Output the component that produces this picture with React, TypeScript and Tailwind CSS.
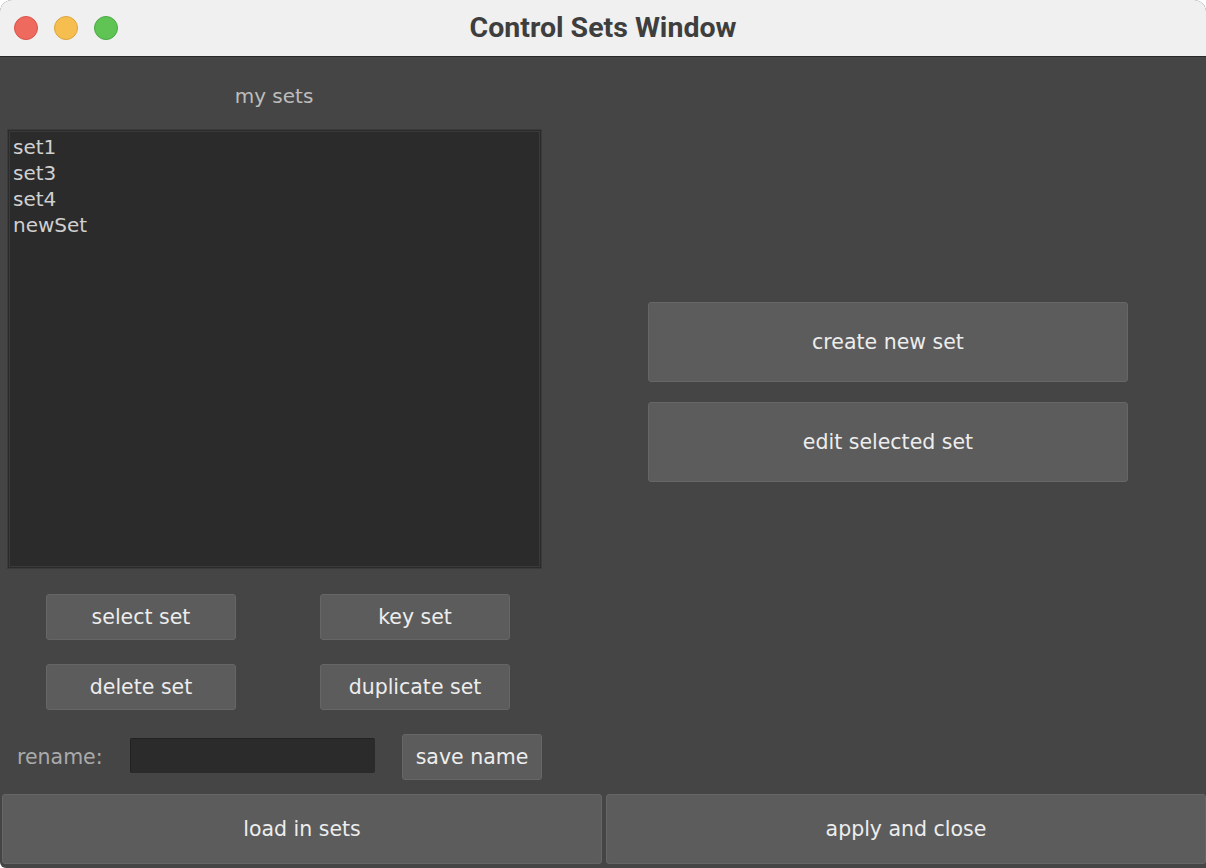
const sets = ['set1', 'set3', 'set4', 'newSet'];

const font = { fontFamily: '"DejaVu Sans", "Liberation Sans", sans-serif' };

const Btn = ({ label, className = '' }: { label: string; className?: string }) => (
  <button
    className={`flex items-center justify-center rounded-[3px] border border-[#666666] bg-[#5c5c5c] text-[20.5px] text-[#ededed] ${className}`}
  >
    {label}
  </button>
);

export default function App() {
  return (
    <div className="flex h-[868px] w-[1206px] flex-col overflow-hidden rounded-t-[12px] rounded-bl-[6px] bg-[#454545]" style={font}>
      {/* title bar */}
      <div className="relative flex h-[57px] shrink-0 items-center justify-center border-b border-[#2a2a2a] bg-[#eff0ef]">
        <div className="absolute left-[14px] top-[16px] flex gap-[16px]">
          <span className="h-[24px] w-[24px] rounded-full border border-[#d9534a] bg-[#ee6a5f]" />
          <span className="h-[24px] w-[24px] rounded-full border border-[#dba53c] bg-[#f6be4f]" />
          <span className="h-[24px] w-[24px] rounded-full border border-[#4aa944] bg-[#5fc454]" />
        </div>
        <span className="text-[28.5px] font-bold text-[#3e3e3e]" style={{ fontFamily: 'Roboto, "Liberation Sans", sans-serif' }}>
          Control Sets Window
        </span>
      </div>

      <div className="flex flex-1">
        {/* left column */}
        <div className="flex w-[548px] flex-col">
          <div className="pt-[27px] text-center text-[20px] leading-[24px] text-[#bdbdbd]">my sets</div>
          <div className="ml-[7px] mt-[21px] h-[440px] w-[535px] border-[3px] border-double border-[#3a3a3a] bg-[#2b2b2b] px-[3px] pt-[2px]">
            {sets.map((s) => (
              <div key={s} className="text-[20px] leading-[26px] text-[#d0d0d0]">
                {s}
              </div>
            ))}
          </div>
          <div className="mt-[25px] grid grid-cols-[190px_190px] gap-x-[84px] gap-y-[24px] pl-[46px]">
            <Btn label="select set" className="h-[46px]" />
            <Btn label="key set" className="h-[46px]" />
            <Btn label="delete set" className="h-[46px]" />
            <Btn label="duplicate set" className="h-[46px]" />
          </div>
          <div className="mt-[24px] flex items-center">
            <span className="ml-[17px] w-[113px] text-[20.5px] text-[#aaaaaa]">rename:</span>
            <div className="mt-[-4px] h-[35px] w-[245px] rounded-[2px] border-t border-l border-[#222222] bg-[#2b2b2b]" />
            <Btn label="save name" className="ml-[27px] h-[46px] w-[140px]" />
          </div>
        </div>

        {/* right column */}
        <div className="flex flex-1 flex-col gap-[20px] pl-[100px] pt-[245px]">
          <Btn label="create new set" className="h-[80px] w-[480px]" />
          <Btn label="edit selected set" className="h-[80px] w-[480px]" />
        </div>
      </div>

      {/* bottom row */}
      <div className="flex gap-[4px] pb-[4px] pl-[2px]">
        <Btn label="load in sets" className="h-[70px] w-[600px]" />
        <Btn label="apply and close" className="h-[70px] w-[600px]" />
      </div>
    </div>
  );
}
